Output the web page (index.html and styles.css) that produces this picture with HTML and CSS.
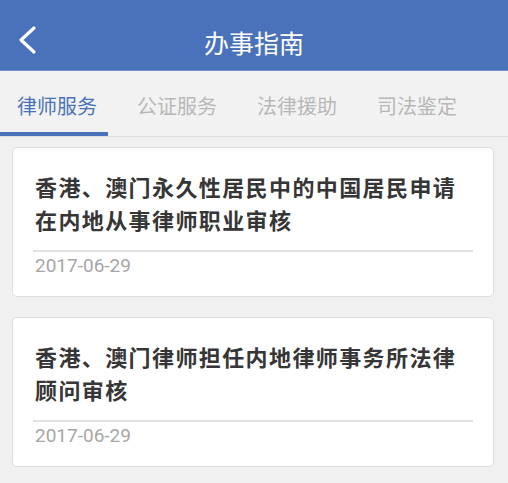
FILE: index.html
```html
<!DOCTYPE html>
<html lang="zh-CN">
  <head>
    <meta charset="UTF-8" />
    <title>办事指南</title>
    <link rel="stylesheet" href="styles.css">
  </head>
  <body>
    <header class="topbar">
      <button class="back-btn" aria-label="返回">
        <svg width="20" height="30" viewBox="0 0 20 30">
          <polyline points="16,3 3,15 16,27" fill="none" stroke="#fff" stroke-width="3.2" stroke-linecap="round" stroke-linejoin="round"/>
        </svg>
      </button>
      <h1>办事指南</h1>
    </header>

    <!-- Tabs -->
    <nav class="tabs">
      <div class="tab active"><span>律师服务</span></div>
      <div class="tab"><span>公证服务</span></div>
      <div class="tab"><span>法律援助</span></div>
      <div class="tab"><span>司法鉴定</span></div>
    </nav>

    <main class="list">
      <div class="card">
        <h3>香港、澳门永久性居民中的中国居民申请在内地从事律师职业审核</h3>
        <p class="date">2017-06-29</p>
      </div>
      <div class="card">
        <h3>香港、澳门律师担任内地律师事务所法律顾问审核</h3>
        <p class="date">2017-06-29</p>
      </div>
    </main>
  </body>
</html>
```

FILE: styles.css
```css
* {
  margin: 0;
  padding: 0;
  box-sizing: border-box;
  font-family: "Noto Sans CJK SC", "Noto Sans", sans-serif;
}

body {
  background: #f0f0f0;
  width: 508px;
  height: 483px;
  overflow: hidden;
}

.topbar {
  position: relative;
  height: 71px;
  background: #4a72ba;
  border-bottom: 1px solid #6d8fcb;
  display: flex;
  align-items: center;
  justify-content: center;
  padding-top: 13px;
}

.topbar h1 {
  color: #fff;
  font-size: 25px;
  font-weight: 400;
  line-height: 32px;
}

.back-btn {
  position: absolute;
  left: 18px;
  top: 25px;
  background: none;
  border: none;
  display: flex;
}

/* Tabs */
.tabs {
  display: flex;
  height: 66px;
  background: #f2f2f2;
  border-bottom: 1px solid #dcdcdc;
}

.tab {
  width: 120px;
  display: flex;
  flex-direction: column;
  justify-content: center;
  color: #b8b8b8;
  font-size: 20px;
  padding-left: 17px;
}

.tab span {
  line-height: 28px;
  margin-top: 4px;
}

.tab.active {
  color: #4a72ba;
  position: relative;
}

.tab.active::after {
  content: "";
  position: absolute;
  left: 0;
  bottom: 0;
  width: 108px;
  height: 4px;
  background: #4a72ba;
}

/* Cards */
.list {
  display: flex;
  flex-direction: column;
  gap: 20px;
  padding: 10px 14px 0 12px;
}

.card {
  background: #fff;
  border: 1px solid #dedede;
  border-radius: 5px;
  height: 150px;
  padding: 22px 20px 0 20px;
}

.card h3 {
  font-size: 22px;
  font-weight: 700;
  color: #363636;
  line-height: 33px;
  letter-spacing: 1.4px;
  padding: 0 0 14px 2px;
  border-bottom: 2px solid #e2e2e2;
}

.date {
  font-family: Roboto, "Liberation Sans", sans-serif;
  font-size: 19px;
  color: #a6a6a6;
  line-height: 28px;
  padding-left: 2px;
}
```
